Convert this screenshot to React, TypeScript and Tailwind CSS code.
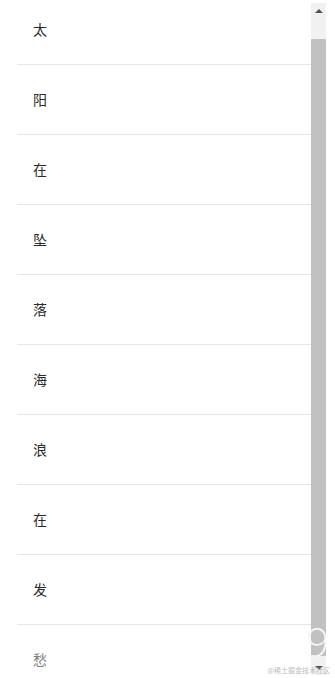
import React from "react";

const chars = ["太", "阳", "在", "坠", "落", "海", "浪", "在", "发", "愁"];

export default function App() {
  return (
    <div
      className="relative flex h-[678px] w-[335px] overflow-hidden bg-white"
      style={{ fontFamily: '"Noto Sans CJK SC", "Noto Sans", sans-serif' }}
    >
      <div className="h-full w-[311px] overflow-hidden pl-[17px]">
        <div className="-mt-[5px]">
          {chars.map((c, i) => (
            <div
              key={i}
              className={`flex h-[70px] items-center border-b border-[#e6e6e6] pl-4 text-[14px] text-[#2a2a2a] ${
                i === chars.length - 1 ? "opacity-60" : ""
              }`}
            >
              {c}
            </div>
          ))}
        </div>
      </div>
      <div className="mt-[3px] flex h-[672px] w-[15px] flex-col bg-[#f1f1f1]">
        <div className="flex h-[15px] items-center justify-center">
          <div className="h-0 w-0 border-x-[4px] border-b-[4px] border-x-transparent border-b-[#505050]" />
        </div>
        <div className="flex-1 px-[2px]">
          <div className="mx-[-2px] mt-[21px] h-[617px] bg-[#c1c1c1]" />
        </div>
        <div className="flex h-[15px] items-center justify-center">
          <div className="h-0 w-0 border-x-[4px] border-t-[4px] border-x-transparent border-t-[#505050]" />
        </div>
      </div>
      <div className="pointer-events-none absolute right-[6px] top-[622px] text-[40px] font-thin leading-none text-[#f6f6f6]" style={{ fontFamily: '"Open Sans", sans-serif' }}>
        9
      </div>
      <div className="pointer-events-none absolute bottom-[4px] right-[5px] text-[7px] leading-none text-[#bdbdbd]">
        @稀土掘金技术社区
      </div>
    </div>
  );
}
